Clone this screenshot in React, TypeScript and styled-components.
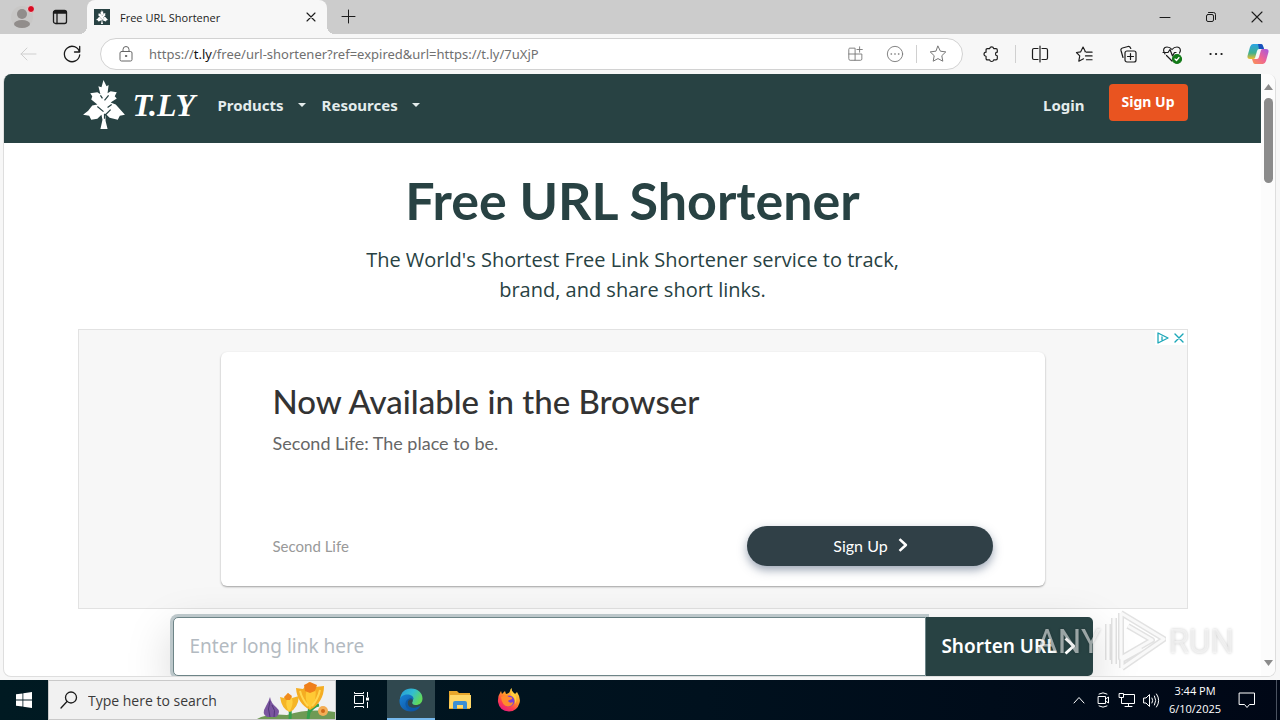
import React from "react";
import styled, { createGlobalStyle } from "styled-components";

const uiFont = '"Open Sans", "Noto Sans", sans-serif';
const siteFont = '"Noto Sans", "Open Sans", sans-serif';
const adFont = 'Lato, Inter, sans-serif';
const forest = "#284243";

const GlobalStyle = createGlobalStyle`
  *, *::before, *::after { box-sizing: border-box; }
  html, body { margin: 0; height: 100%; overflow: hidden; }
  #root { height: 100%; }
  button, input { font: inherit; }
  svg { display: block; flex: none; }
`;

const Screen = styled.div`
  display: flex;
  flex-direction: column;
  height: 100vh;
  background: #f7f7f7;
  font-family: ${uiFont};
`;

const Line = styled.svg<{ $size?: number; $color?: string; $weight?: number; $cap?: string }>`
  width: ${(p) => p.$size ?? 20}px;
  height: ${(p) => p.$size ?? 20}px;
  fill: none;
  stroke: ${(p) => p.$color ?? "#1b1b1b"};
  stroke-width: ${(p) => p.$weight ?? 1};
  stroke-linecap: ${(p) => p.$cap ?? "round"};
  stroke-linejoin: round;
  overflow: visible;
`;

const IconButton = styled.button<{ $width?: number }>`
  display: flex;
  align-items: center;
  justify-content: center;
  flex: none;
  width: ${(p) => p.$width ?? 44}px;
  height: 32px;
  padding: 0;
  border: 0;
  background: none;
`;

/* Browser title bar */

const TitleBar = styled.header`
  display: flex;
  align-items: stretch;
  flex: none;
  height: 34px;
  background: #cccccc;
`;

const StripStart = styled.div`
  display: flex;
  align-items: center;
  width: 87px;
  padding-left: 3px;
`;

const Tab = styled.div`
  position: relative;
  display: flex;
  align-items: center;
  width: 240px;
  padding: 0 0 0 7px;
  border-radius: 8px 8px 0 0;
  background: #f7f7f7;
  font-size: 11px;
  color: #1b1b1b;
  &::before, &::after {
    content: "";
    position: absolute;
    bottom: 0;
    width: 8px;
    height: 8px;
  }
  &::before {
    left: -8px;
    background: radial-gradient(circle at 0 0, transparent 8px, #f7f7f7 8px);
  }
  &::after {
    right: -8px;
    background: radial-gradient(circle at 100% 0, transparent 8px, #f7f7f7 8px);
  }
`;

const TabTitle = styled.span`
  flex: 1;
  padding-left: 10px;
`;

const WindowControls = styled.div`
  display: flex;
  align-items: center;
  margin-left: auto;
`;

/* Browser toolbar */

const Toolbar = styled.div`
  display: flex;
  align-items: center;
  flex: none;
  height: 40px;
  padding: 0 2px 0 6px;
`;

const AddressBar = styled.div`
  display: flex;
  align-items: center;
  flex: 1;
  height: 32px;
  margin: 0 6px;
  padding: 0 5px 0 17px;
  border: 1px solid #d2d2d2;
  border-radius: 16px;
  background: #fff;
`;

const Url = styled.div`
  flex: 1;
  padding-left: 15px;
  font-family: ${siteFont};
  font-size: 13px;
  line-height: 18px;
  color: #707070;
  white-space: nowrap;
  b { font-weight: 400; color: #111; }
`;

const Divider = styled.i`
  width: 1px;
  height: 18px;
  margin: 0 2px;
  background: #d0d0d0;
`;

/* Page frame */

const Frame = styled.div`
  display: flex;
  flex: 1;
  min-height: 0;
  margin: 0 4px 3px 3px;
  border: 1px solid #dedede;
  border-top: 0;
  border-radius: 8px;
  background: #fff;
  overflow: hidden;
`;

const Page = styled.div`
  flex: 1;
  min-width: 0;
  overflow: hidden;
  font-family: ${siteFont};
`;

const Scrollbar = styled.div`
  display: flex;
  flex-direction: column;
  align-items: center;
  justify-content: space-between;
  width: 14px;
  padding: 10px 0;
  background: #fcfcfc;
`;

const Thumb = styled.div`
  width: 9px;
  height: 85px;
  margin: 8px 0 auto;
  border-radius: 5px;
  background: #8b8b8b;
`;

const Container = styled.div`
  max-width: 1110px;
  margin: 0 auto;
`;

const Nav = styled.nav`
  height: 69px;
  background: ${forest};
`;

const NavRow = styled(Container)`
  display: flex;
  align-items: center;
  height: 61px;
`;

const Brand = styled.a`
  display: flex;
  align-items: center;
  gap: 8px;
  width: 140px;
  padding-left: 5px;
  color: #fff;
  font: italic bold 32px/48px "Liberation Serif", serif;
  text-decoration: none;
`;

const NavLink = styled.a`
  display: flex;
  align-items: center;
  gap: 14px;
  margin-right: 16px;
  color: #e4ecec;
  font-size: 15px;
  font-weight: 700;
  text-decoration: none;
`;

const Caret = styled.span`
  border: 4px solid transparent;
  border-top-color: currentColor;
  border-bottom: 0;
`;

const NavEnd = styled.div`
  display: flex;
  align-items: center;
  margin-left: auto;
  gap: 8px;
`;

const SignUp = styled.a`
  height: 37px;
  margin-bottom: 4px;
  padding: 0 13px;
  border-radius: 4px;
  background: #e95420;
  color: #fff;
  font-size: 14px;
  font-weight: 700;
  line-height: 36px;
  text-decoration: none;
`;

const Title = styled.h1`
  margin: 24px 0 11px;
  color: ${forest};
  font-family: Lato, sans-serif;
  font-size: 52px;
  font-weight: 700;
  line-height: 67px;
  text-align: center;
`;

const Lead = styled.p`
  max-width: 540px;
  margin: 0 auto 24px;
  color: ${forest};
  font-family: ${uiFont};
  font-size: 20px;
  line-height: 30px;
  text-align: center;
`;

/* Advertisement */

const Ad = styled.aside`
  position: relative;
  height: 280px;
  padding: 22px;
  border: 1px solid #e2e2e2;
  background: #f7f7f7;
  font-family: ${adFont};
`;

const AdMarks = styled.div`
  position: absolute;
  top: 0;
  right: 0;
  display: flex;
  gap: 2px;
  padding: 1px 1px 0;
  background: #fff;
`;

const AdMark = styled.button`
  display: flex;
  padding: 0;
  border: 0;
  background: none;
`;

const AdCard = styled.div`
  display: flex;
  flex-direction: column;
  max-width: 824px;
  height: 234px;
  margin: 0 auto;
  padding: 29px 52px 20px;
  border-radius: 6px;
  background: #fff;
  box-shadow: 0 1px 2px rgba(0, 0, 0, 0.36);
`;

const AdTitle = styled.h2`
  margin: 0;
  color: #333;
  font-size: 33px;
  font-weight: 500;
  line-height: 40px;
`;

const AdText = styled.p`
  margin: 10px 0 0;
  color: #666;
  font-size: 18px;
  line-height: 24px;
`;

const AdFoot = styled.div`
  display: flex;
  align-items: center;
  justify-content: space-between;
  margin-top: auto;
  color: #999;
  font-size: 15px;
`;

const AdButton = styled.button`
  display: flex;
  align-items: center;
  justify-content: center;
  gap: 8px;
  width: 246px;
  height: 40px;
  padding: 0 0 2px 4px;
  border: 0;
  border-radius: 20px;
  background: #304047;
  color: #fff;
  font-size: 16px;
  box-shadow: 0 4px 10px rgba(60, 80, 110, 0.5);
`;

/* Link form */

const LinkForm = styled.form`
  position: relative;
  display: flex;
  max-width: 920px;
  height: 59px;
  margin: 8px auto 0;
  border-radius: 5px;
  box-shadow: 0 16px 48px rgba(0, 0, 0, 0.18);
`;

const LinkInput = styled.input`
  flex: 1;
  min-width: 0;
  padding: 0 16px 2px;
  border: 1px solid #6d8487;
  border-radius: 5px 0 0 5px;
  outline: 0;
  background: #fff;
  box-shadow: 0 0 0 3px #bcc7ca;
  color: ${forest};
  font-size: 19px;
  &::placeholder { color: #b3bac1; opacity: 1; }
`;

const ShortenButton = styled.button`
  display: flex;
  align-items: center;
  justify-content: center;
  gap: 4px;
  position: relative;
  width: 167px;
  padding: 0 0 2px 2px;
  border: 0;
  border-radius: 0 5px 5px 0;
  background: ${forest};
  color: #fff;
  font-size: 19px;
  font-weight: 600;
  white-space: nowrap;
`;

/* Watermark */

const Watermark = styled.div`
  position: fixed;
  right: 46px;
  bottom: 46px;
  display: flex;
  align-items: center;
  gap: 3px;
  color: rgba(255, 255, 255, 0.55);
  font: 400 33px/64px "Liberation Sans Narrow", Roboto, sans-serif;
  text-shadow: 0 0 3px rgba(0, 0, 0, 0.22);
  pointer-events: none;
`;

/* Taskbar */

const Taskbar = styled.footer`
  display: flex;
  align-items: stretch;
  flex: none;
  height: 40px;
  background: linear-gradient(90deg, #001a22, #00111e 55%, #000716);
  color: #fff;
`;

const TaskButton = styled.button<{ $active?: boolean; $width?: number }>`
  display: flex;
  align-items: center;
  justify-content: center;
  width: ${(p) => p.$width ?? 49}px;
  padding: 0;
  border: 0;
  background: ${(p) => (p.$active ? "#30484f" : "none")};
  box-shadow: ${(p) => (p.$active ? "inset 0 -2px #76b9ed" : "none")};
`;

const Search = styled.label`
  display: flex;
  align-items: center;
  width: 288px;
  padding-left: 11px;
  border: 1px solid #c9c9c9;
  background: #f1f1f1;
`;

const SearchInput = styled.input`
  flex: 1;
  min-width: 0;
  padding: 0 0 0 10px;
  border: 0;
  outline: 0;
  background: none;
  font-size: 14px;
  &::placeholder { color: #3a3a3a; opacity: 1; }
`;

const Tray = styled.div`
  display: flex;
  align-items: stretch;
  margin-left: auto;
`;

const ShowDesktop = styled.button`
  width: 4px;
  margin-left: 9px;
  padding: 0;
  border: 0;
  border-left: 1px solid #4a5260;
  background: none;
`;

const Clock = styled.time`
  display: flex;
  flex-direction: column;
  justify-content: center;
  width: 64px;
  font-size: 11px;
  line-height: 18px;
  text-align: center;
  white-space: nowrap;
`;

const treePath =
  "M20 0 23 6 25 5 24 13 27 11 33 12 31 16 33 18 27 22 32 24 41 34 36 35 34 39 26 37 22 33 22 40 24 48H17L19 39 18 34 14 38 8 39 6 35 0 34 5 30 9 25 14 24 8 19 9 16 7 13 14 12 17 14 15 6 18 7Z";
const veinPath = "M21 38V33M21 35 27 29M20 31 14 26M21 20 25 15M19 18 17 15M28 24 24 27";

function Tree({ small }: { small?: boolean }) {
  return (
    <svg width={small ? 12 : 42} height={small ? 14 : 49} viewBox="0 0 41 48" aria-hidden="true">
      <path d={treePath} fill="#fff" />
      <path d={veinPath} stroke={forest} strokeWidth="1.2" fill="none" />
    </svg>
  );
}

const Favicon = styled.span`
  display: flex;
  align-items: center;
  justify-content: center;
  width: 16px;
  height: 16px;
  background: ${forest};
`;

const Chevron = ({ size, weight = 2 }: { size: number; weight?: number }) => (
  <Line viewBox="0 0 12 12" $size={size} $color="#fff" $weight={weight} $cap="butt">
    <path d="M3 1 8.500 6 3 11" />
  </Line>
);

function TabStrip() {
  return (
    <TitleBar>
      <StripStart>
        <IconButton $width={38} aria-label="Profile">
          <svg width="24" height="24" viewBox="0 0 24 24">
            <circle cx="12" cy="12" r="11" fill="#c8c7c6" />
            <circle cx="12" cy="9" r="5" fill="#918d8b" />
            <ellipse cx="12" cy="19" rx="8" ry="4" fill="#918d8b" />
            <circle cx="21" cy="4" r="3.500" fill="#d80b22" stroke="#e6d4d4" />
          </svg>
        </IconButton>
        <IconButton $width={38} aria-label="Tab actions">
          <Line viewBox="0 0 16 16" $size={16} $weight={1.3}>
            <rect x="1.500" y="1.500" width="13" height="13" rx="2" />
            <path d="M1.500 4H14.500M5 4V14.500" />
            <path d="M2 3H14" strokeWidth="2" />
          </Line>
        </IconButton>
      </StripStart>
      <Tab>
        <Favicon><Tree small /></Favicon>
        <TabTitle>Free URL Shortener</TabTitle>
        <IconButton $width={32} aria-label="Close tab">
          <Line viewBox="0 0 10 10" $size={8} $weight={1.4}><path d="M0 0 10 10M10 0 0 10" /></Line>
        </IconButton>
      </Tab>
      <IconButton $width={42} aria-label="New tab">
        <Line viewBox="0 0 13 13" $size={13}><path d="M6.500 0V13M0 6.500H13" /></Line>
      </IconButton>
      <WindowControls>
        <IconButton $width={46} aria-label="Minimize">
          <Line viewBox="0 0 10 10" $size={10}><path d="M0 5.500H10" /></Line>
        </IconButton>
        <IconButton $width={46} aria-label="Restore">
          <Line viewBox="0 0 10 10" $size={10}>
            <rect x="0.500" y="2.500" width="7" height="7" rx="1.500" />
            <path d="M2.500 .5H7.500A2 2 0 0 1 9.500 2.500V7.500" />
          </Line>
        </IconButton>
        <IconButton $width={46} aria-label="Close">
          <Line viewBox="0 0 10 10" $size={10} $weight={1.1}><path d="M0 0 10 10M10 0 0 10" /></Line>
        </IconButton>
      </WindowControls>
    </TitleBar>
  );
}

const starPath = "M10 2.200 12.400 7.200 17.800 7.900 13.800 11.700 14.800 17.200 10 14.600 5.200 17.200 6.200 11.700 2.200 7.900 7.600 7.200Z";

function BrowserToolbar() {
  return (
    <Toolbar>
      <IconButton aria-label="Back">
        <Line viewBox="0 0 20 20" $color="#cfcfcf"><path d="M18 10H3M9 4 3 10 9 16" /></Line>
      </IconButton>
      <IconButton aria-label="Refresh">
        <Line viewBox="0 0 20 20" $weight={1.3}><path d="M17.500 8A7.700 7.700 0 1 0 17.700 11M17.700 2.500V8H12.500" /></Line>
      </IconButton>
      <AddressBar>
        <Line viewBox="0 0 16 16" $size={16} $color="#666">
          <rect x="2" y="5.500" width="12" height="9.500" rx="1.500" />
          <path d="M5 5.500V3.500A3 3 0 0 1 11 3.500V5.500" />
          <circle cx="8" cy="10" r=".7" fill="#666" />
        </Line>
        <Url>https://<b>t.ly</b>/free/url-shortener?ref=expired&amp;url=https://t.ly/7uXjP</Url>
        <IconButton $width={40} aria-label="Install app">
          <Line viewBox="0 0 20 20" $size={18} $color="#777">
            <path d="M2 4.500Q2 3.500 3 3.500H9V17H3.500Q2 17 2 15.500ZM2 10H16.500V15.500Q16.500 17 15 17H9M14 2V8M11 5H17" />
          </Line>
        </IconButton>
        <IconButton $width={38} aria-label="More information">
          <Line viewBox="0 0 20 20" $size={18} $color="#777">
            <circle cx="10" cy="10" r="8.500" />
            <path d="M5.800 10H6M9.900 10H10.100M14 10H14.200" strokeWidth="1.800" />
          </Line>
        </IconButton>
        <Divider />
        <IconButton $width={38} aria-label="Add to favorites">
          <Line viewBox="0 0 20 20" $size={20} $color="#777"><path d={starPath} /></Line>
        </IconButton>
      </AddressBar>
      <IconButton aria-label="Extensions">
        <Line viewBox="0 0 20 20" $size={18} $weight={1.3}>
          <path d="M6 4H8.500A2.300 2.300 0 0 1 13 4H15.500Q17 4 17 5.500V8A2 2 0 0 0 17 12V15Q17 16.500 15.500 16.500H13A2.300 2.300 0 0 1 8.500 16.500H6Q4.500 16.500 4.500 15V12.500A2.200 2.200 0 0 1 4.500 8V5.500Q4.500 4 6 4Z" />
        </Line>
      </IconButton>
      <Divider />
      <IconButton aria-label="Split screen">
        <Line viewBox="0 0 18 18" $size={18} $weight={1.2}>
          <path d="M7 3.500H3Q1.500 3.500 1.500 5V13Q1.500 14.500 3 14.500H7M11 3.500H15Q16.500 3.500 16.500 5V13Q16.500 14.500 15 14.500H11M9 1V17" />
        </Line>
      </IconButton>
      <IconButton aria-label="Favorites">
        <Line viewBox="0 0 20 20" $size={19} $weight={1.2}>
          <path d="M10.500 7H11L8.500 2.200 6 7.200 1.500 7.900 5 11.500 4 17 9 14.500M12 7.500H18M11 11.500H18M12 15.500H18" />
        </Line>
      </IconButton>
      <IconButton aria-label="Collections">
        <Line viewBox="0 0 18 18" $size={18} $weight={1.2}>
          <rect x="6" y="6" width="11" height="11" rx="2" />
          <path d="M11.500 8.500V14.500M8.500 11.500H14.500M4 12.500 2 5.500Q1.500 3.500 3.500 3L9 1.500Q11 1 11.800 3.500" />
        </Line>
      </IconButton>
      <IconButton aria-label="Browser essentials">
        <Line viewBox="0 0 20 20" $size={20} $weight={1.2}>
          <path d="M3 10C0 6 2 3 5 3Q8 3 10 5.500 12 3 15 3C18 3 19.500 6 17.500 9M4.500 11.500 10 17M1 8.500H6L8 5.500 10.500 12 12.500 8.500H14" />
          <circle cx="15" cy="15" r="4.500" fill="#137a19" stroke="#137a19" />
          <path d="M13 15 14.500 16.500 17 13.500" stroke="#fff" />
        </Line>
      </IconButton>
      <IconButton aria-label="Settings and more">
        <Line viewBox="0 0 16 16" $size={16} $weight={2.2}><path d="M2.500 8H2.600M8 8H8.100M13.500 8H13.600" /></Line>
      </IconButton>
      <IconButton $width={40} aria-label="Copilot">
        <svg width="22" height="20" viewBox="0 0 22 20">
          <defs>
            <linearGradient id="cop-a" x1="0" y1="0" x2="0" y2="1">
              <stop offset="0" stopColor="#2ba5e6" /><stop offset=".6" stopColor="#40b08e" /><stop offset="1" stopColor="#f1bd2b" />
            </linearGradient>
            <linearGradient id="cop-b" x1="1" y1="0" x2="0" y2="1">
              <stop offset="0" stopColor="#a359e2" /><stop offset=".5" stopColor="#ed6496" /><stop offset="1" stopColor="#fb9552" />
            </linearGradient>
          </defs>
          <path d="M6 0H14Q15.500 0 16 2L17 5H12Q10.500 5 10 7L8 14Q7.500 15 6 15H3Q0 15 .5 12L3 3Q4 0 6 0Z" fill="url(#cop-a)" />
          <path d="M11 0H14Q15.500 0 16 2L17 5H12Z" fill="#1a51bd" />
          <path d="M16 20H8Q6.500 20 6 18L5 15H10Q11.500 15 12 13L14 6Q14.500 5 16 5H19Q22 5 21.500 8L19 17Q18 20 16 20Z" fill="url(#cop-b)" />
        </svg>
      </IconButton>
    </Toolbar>
  );
}

function Advert() {
  return (
    <Ad>
      <AdMarks>
        <AdMark aria-label="About this ad">
          <Line viewBox="0 0 14 14" $size={14} $color="#1ba7b8" $weight={1.3}>
            <path d="M2 2 12 7 2 12ZM6 6V9" />
          </Line>
        </AdMark>
        <AdMark aria-label="Close ad">
          <Line viewBox="0 0 14 14" $size={14} $color="#1ba7b8" $weight={1.4}><path d="M3 3 11 11M11 3 3 11" /></Line>
        </AdMark>
      </AdMarks>
      <AdCard>
        <AdTitle>Now Available in the Browser</AdTitle>
        <AdText>Second Life: The place to be.</AdText>
        <AdFoot>
          <span>Second Life</span>
          <AdButton>Sign Up <Chevron size={14} weight={2.2} /></AdButton>
        </AdFoot>
      </AdCard>
    </Ad>
  );
}

function Flowers() {
  return (
    <svg width="78" height="38" viewBox="0 0 78 38" aria-hidden="true">
      <path d="M0 38Q10 32 30 34 52 27 78 31V38Z" fill="#6f9a55" />
      <path d="M33 38Q34 25 31 20M51 38Q54 20 53 12M51 33Q56 25 62 24" stroke="#35a04e" strokeWidth="3" fill="none" />
      <path d="M13 16Q12 20 9 25 4 33 10 36H19Q25 31 19 26 14 22 13 16Z" fill="#7a559f" />
      <path d="M13 20Q10 28 13 36M15 24Q19 29 17 36" stroke="#51377a" fill="none" />
      <path d="M23 16 27 17 31 12 35 17 42 15Q41 27 33 31 25 29 23 16Z" fill="#f5b526" />
      <path d="M31 14Q27 23 32 31 37 24 35 17Z" fill="#ffd03f" />
      <path d="M27 16 31 12 35 15 33 19H29Z" fill="#f08a1c" />
      <g transform="translate(3 0)">
        <path d="M36 7 43 8 49 1 55 6 64 5Q64 21 50 29 37 22 36 7Z" fill="#f5ad22" />
        <path d="M49 5Q42 15 50 28 58 18 55 7Z" fill="#ffca35" />
        <path d="M44 4 50 1 57 4 55 10 50 12 45 10Z" fill="#ef7f1b" />
        <path d="M40 10Q42 18 48 25M60 9Q58 18 52 25" stroke="#ffd64f" strokeWidth="2" fill="none" />
      </g>
      <circle cx="66" cy="30" r="5" fill="#f3ad55" /><circle cx="66" cy="30" r="2" fill="#cf6a19" />
    </svg>
  );
}

function EdgeLogo() {
  return (
    <svg width="24" height="24" viewBox="0 0 24 24">
      <defs>
        <linearGradient id="edge-top" x1="0" y1="0" x2="1" y2=".5">
          <stop offset="0" stopColor="#2598d9" /><stop offset=".55" stopColor="#32bdd1" /><stop offset="1" stopColor="#60d95b" />
        </linearGradient>
        <linearGradient id="edge-low" x1="0" y1="0" x2="1" y2="1">
          <stop offset="0" stopColor="#1683d8" /><stop offset="1" stopColor="#114a92" />
        </linearGradient>
      </defs>
      <path d="M1 11C2 4 6 .5 12 .5 19 .5 23.500 5 23.500 10.500 23.500 15 20 17 17 17 14 17 12.500 15.500 13.500 14 15 11 12.500 8 8.500 8 5 8 2 9 1 11Z" fill="url(#edge-top)" />
      <path d="M.5 13C.5 9 4 6.500 8.500 6.500 12.500 6.500 15 9 14.500 11.500 11 9 8 12 8.500 15.500 9 20 15 22 21 18.500 19 22 16 23.500 12 23.500 5 23.500 .5 19 .5 13Z" fill="url(#edge-low)" />
      <path d="M8.500 15.500C9 20 15 21.500 21.500 17.500 20 21 16 23 13 22.500 7 22 5 16 7.500 12.500 10 10 13 10 14 12 11 10.500 8 12.500 8.500 15.500Z" fill="#0b59a8" />
    </svg>
  );
}

function FirefoxLogo() {
  return (
    <svg width="24" height="24" viewBox="0 0 24 24">
      <defs>
        <linearGradient id="fox" x1=".8" y1="0" x2=".2" y2="1">
          <stop offset="0" stopColor="#ffe34c" /><stop offset=".4" stopColor="#ff9a27" /><stop offset=".7" stopColor="#ff3f4c" /><stop offset="1" stopColor="#e31587" />
        </linearGradient>
      </defs>
      <path d="M15 0Q14 4 18 6L20 4Q24 10 22.500 15 20 23.500 12 23.500 2.500 23 1 14 .5 8 4 3L5 6Q7 4 8 3L9 6Q13 5 13 3 13 1 15 0Z" fill="url(#fox)" />
      <circle cx="12" cy="13" r="5.500" fill="#7a3fd5" />
      <path d="M4 9Q9 6 12 9 16 9 15 11 12 12 11 13 13 16 16 14 16 18 11 18.500 5 18 4 9Z" fill="#ff8b2c" />
      <path d="M15 3Q22 9 18 16 19 10 14 7Z" fill="#ffcf3e" />
    </svg>
  );
}

function WindowsTaskbar() {
  return (
    <Taskbar>
      <TaskButton $width={48} aria-label="Start">
        <svg width="16" height="16" viewBox="0 0 16 16" fill="#fff">
          <path d="M0 2.300 6.500 1.400V7.600H0ZM7.300 1.300 16 0V7.600H7.300ZM0 8.400H6.500V14.600L0 13.700ZM7.300 8.400H16V16L7.300 14.700Z" />
        </svg>
      </TaskButton>
      <Search>
        <Line viewBox="0 0 18 18" $size={18} $weight={1.3}><circle cx="11" cy="6.500" r="5.500" /><path d="M7 10.500 1 17" /></Line>
        <SearchInput placeholder="Type here to search" aria-label="Search" />
        <Flowers />
      </Search>
      <TaskButton $width={51} aria-label="Task view">
        <svg width="20" height="18" viewBox="0 0 20 18" fill="none" stroke="#fff">
          <path d="M2.500 4.500H11.500V12.500H2.500ZM2.500 1V2.500H11.500V1M2.500 17V15.500H11.500V17M15.500 1V6M15.500 11V17" />
          <path d="M14 8H17" strokeWidth="3" />
        </svg>
      </TaskButton>
      <TaskButton $active $width={48} aria-label="Microsoft Edge"><EdgeLogo /></TaskButton>
      <TaskButton aria-label="File Explorer">
        <svg width="22" height="20" viewBox="0 0 22 20">
          <path d="M0 1H8L10 3H21V19H0Z" fill="#e8a72b" />
          <path d="M1 5H22V18H0Z" fill="#ffd767" />
          <path d="M4 19V13Q4 11 6 11H16Q18 11 18 13V19H14V15H8V19Z" fill="#3b8ed4" />
        </svg>
      </TaskButton>
      <TaskButton aria-label="Firefox"><FirefoxLogo /></TaskButton>
      <Tray>
        <TaskButton $width={24} aria-label="Hidden icons">
          <Line viewBox="0 0 12 12" $size={12} $color="#fff"><path d="M1 9 6 3.500 11 9" /></Line>
        </TaskButton>
        <TaskButton $width={24} aria-label="Meet now">
          <Line viewBox="0 0 16 16" $size={16} $color="#fff">
            <path d="M3.500 4.500H10.500V11.500H3.500ZM10.500 7 13.500 5V11L10.500 9M4 2Q8 -.5 12 2M4 14Q8 16.500 12 14" />
          </Line>
        </TaskButton>
        <TaskButton $width={24} aria-label="Network">
          <Line viewBox="0 0 16 16" $size={16} $color="#fff">
            <path d="M5 2.500H15.500V11.500H2.500V7M9.500 11.500V14.500M6 14.500H13M.5 1.500H4.500V5.500H.5ZM2.500 5.500V7" />
          </Line>
        </TaskButton>
        <TaskButton $width={24} aria-label="Volume">
          <Line viewBox="0 0 17 16" $size={17} $color="#fff">
            <path d="M1 5.500H3L6.500 2V14L3 10.500H1ZM9 5.500Q10.500 8 9 10.500M11.500 3.500Q14 8 11.500 12.500M13.500 1.500Q18 8 13.500 14.500" />
          </Line>
        </TaskButton>
        <Clock><span>3:44 PM</span><span>6/10/2025</span></Clock>
        <TaskButton $width={40} aria-label="Notifications">
          <Line viewBox="0 0 16 16" $size={16} $color="#fff"><path d="M.5 1H15.500V12.500H10.500L8 15.500 5.500 12.500H.5Z" /></Line>
        </TaskButton>
        <ShowDesktop aria-label="Show desktop" />
      </Tray>
    </Taskbar>
  );
}

const playPath = "M17 3 60 29 18 58M17 3V48L48 30 24 16M18 58V50L38 39";
const barPath = "M4 14V50M10 8V54";

export default function App() {
  return (
    <Screen>
      <GlobalStyle />
      <TabStrip />
      <BrowserToolbar />
      <Frame>
        <Page>
          <Nav>
            <NavRow>
              <Brand href="#"><Tree />T.LY</Brand>
              <NavLink href="#">Products <Caret /></NavLink>
              <NavLink href="#">Resources <Caret /></NavLink>
              <NavEnd>
                <NavLink href="#">Login</NavLink>
                <SignUp href="#">Sign Up</SignUp>
              </NavEnd>
            </NavRow>
          </Nav>
          <Container>
            <Title>Free URL Shortener</Title>
            <Lead>The World's Shortest Free Link Shortener service to track, brand, and share short links.</Lead>
            <Advert />
            <LinkForm onSubmit={(e) => e.preventDefault()}>
              <LinkInput placeholder="Enter long link here" aria-label="Long link" />
              <ShortenButton>Shorten URL <Chevron size={18} /></ShortenButton>
            </LinkForm>
          </Container>
        </Page>
        <Scrollbar>
          <svg width="9" height="6" viewBox="0 0 9 6"><path d="M0 6 4.500 0 9 6Z" fill="#8b8b8b" /></svg>
          <Thumb />
          <svg width="9" height="6" viewBox="0 0 9 6"><path d="M0 0H9L4.500 6Z" fill="#8b8b8b" /></svg>
        </Scrollbar>
      </Frame>
      <WindowsTaskbar />
      <Watermark>
        <span>ANY</span>
        <svg width="62" height="64" viewBox="0 0 62 64" fill="none" strokeLinejoin="round">
          <g stroke="rgba(110,110,110,0.2)" strokeWidth="6">
            <path d={playPath} />
            <path d={barPath} />
          </g>
          <g stroke="rgba(255,255,255,0.8)" strokeWidth="3">
            <path d={playPath} />
            <path d={barPath} />
          </g>
        </svg>
        <span>RUN</span>
      </Watermark>
    </Screen>
  );
}
